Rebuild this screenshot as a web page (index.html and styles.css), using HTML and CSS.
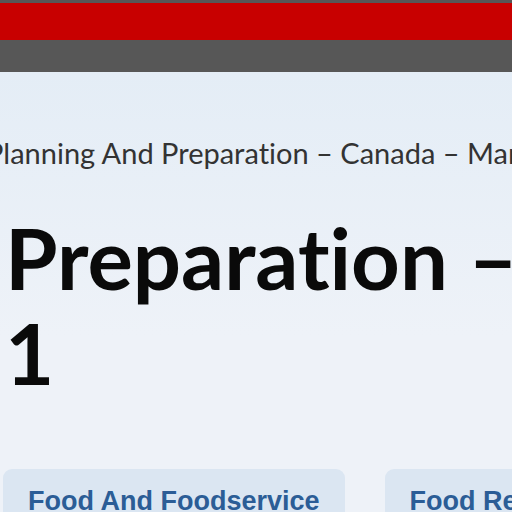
FILE: index.html
```html
<!DOCTYPE html>
<html>
<head>
<meta charset="utf-8">
<link rel="stylesheet" href="styles.css">
</head>
<body>
<header class="topbar">
  <div class="redbar"></div>
  <div class="navbar"></div>
</header>
<main class="content">
  <nav class="breadcrumb">Planning And Preparation – Canada – Market Analysis</nav>
  <h1 class="title">Preparation –<br>1</h1>
  <div class="tags">
    <a class="tag">Food And Foodservice</a>
    <a class="tag">Food Retail</a>
  </div>
</main>
</body>
</html>
```
FILE: styles.css
```css
html, body {
  margin: 0;
  padding: 0;
  width: 512px;
  height: 512px;
  overflow: hidden;
  background: #edf2f8;
}
.topbar {
  background: #575757;
  padding-top: 3px;
}
.redbar {
  height: 37px;
  background: #c80000;
}
.navbar {
  height: 32px;
  background: #575757;
}
.content {
  background: linear-gradient(#e4edf6, #eef2f8 60%);
  height: 440px;
  overflow: hidden;
  font-variant-ligatures: none;
}
.breadcrumb {
  font-family: Lato, sans-serif;
  font-size: 29px;
  color: #333;
  white-space: nowrap;
  margin-left: -14px;
  padding-top: 65px;
  line-height: 32px;
}
.title {
  font-family: Lato, sans-serif;
  font-weight: 700;
  font-size: 85px;
  line-height: 95px;
  color: #0a0a0a;
  margin: 41px 0 0 5px;
  white-space: nowrap;
}
.tags {
  display: flex;
  gap: 40px;
  margin: 69px 0 0 3px;
}
.tag {
  flex: none;
  background: #dbe6f2;
  border-radius: 9px;
  padding: 17px 25px 8px 25px;
  font-family: "Liberation Sans", Arial, sans-serif;
  font-weight: 700;
  font-size: 27px;
  color: #2b5d96;
}
```
